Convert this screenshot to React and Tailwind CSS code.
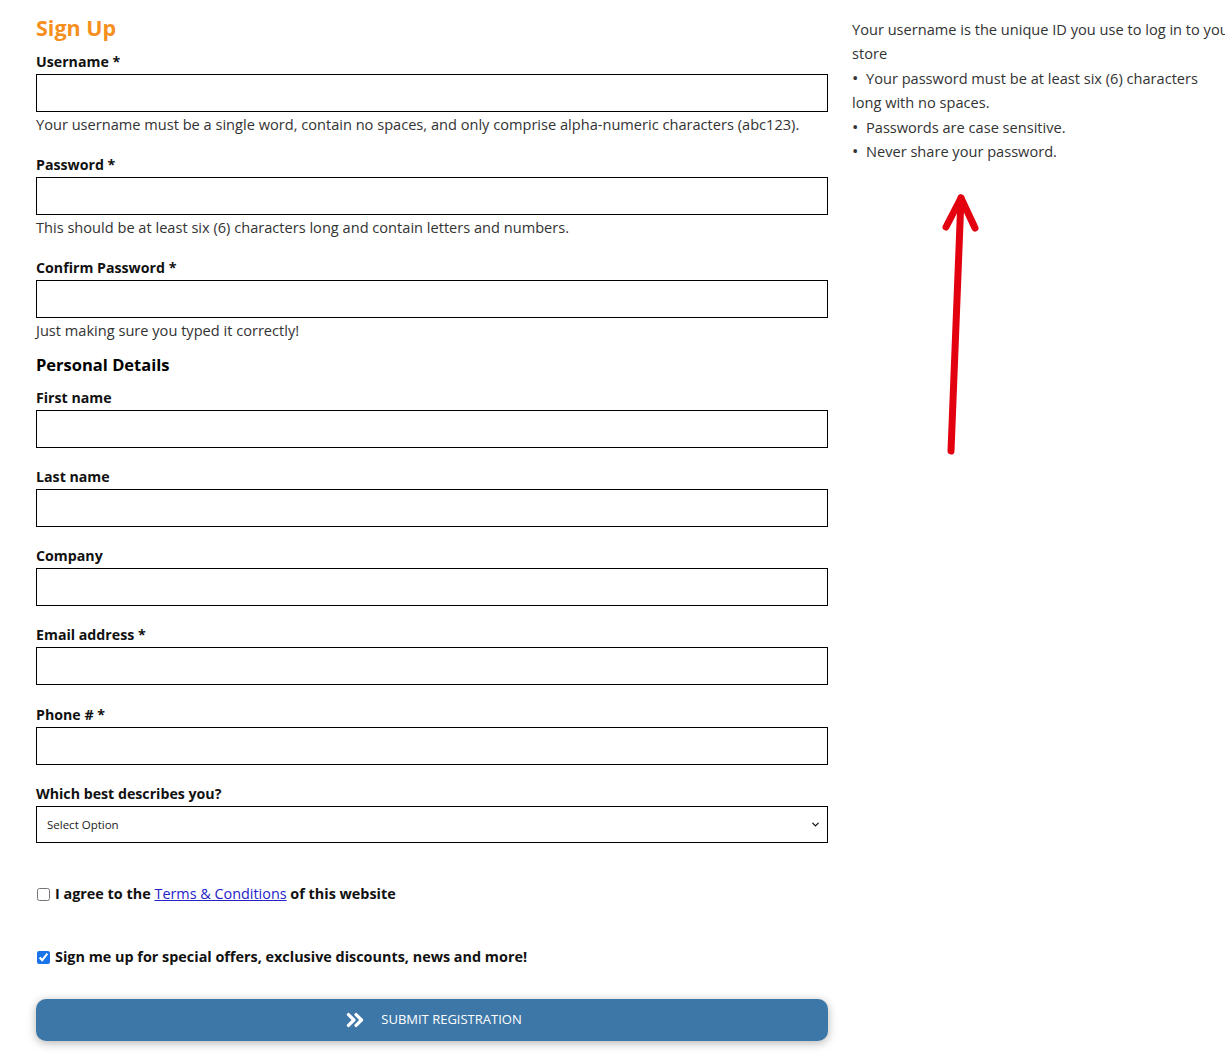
import React from 'react';
import { ChevronsRight, ChevronDown } from 'lucide-react';

const BODY = "font-['Open_Sans',sans-serif]";
const HEAD = "font-['Open_Sans',sans-serif]";

// Label + input + optional help line
const Field = ({ label, required, help, className = '' }) => (
  <div className={className || (help ? 'mb-[21px]' : 'mb-[19px]')}>
    <label className="block text-[14.2px] leading-5 font-bold text-[#111] mb-[2px]">
      {label}{required && ' *'}
    </label>
    <input type="text" className="block w-full h-[38px] border border-black bg-white" />
    {help && <p className="mt-[2px] text-[14.6px] leading-5 text-[#333]">{help}</p>}
  </div>
);

const Arrow = () => (
  <svg className="absolute left-[930px] top-[185px]" width="70" height="280" viewBox="0 0 70 280" fill="none">
    <path d="M21 266 L31 13" stroke="#e3000f" strokeWidth="7" strokeLinecap="round" />
    <path d="M16 42 L31 13 L45 43" stroke="#e3000f" strokeWidth="7" strokeLinecap="round" strokeLinejoin="round" />
  </svg>
);

export default function App() {
  return (
    <div className={`relative w-[1225px] h-[1062px] overflow-hidden bg-white ${BODY}`}>
      <div className="flex pl-9">
        {/* form column */}
        <div className="w-[792px] shrink-0 pt-3">
          <h1 className={`${HEAD} text-[21.5px] leading-8 font-bold text-[#f5901e] mb-2`}>Sign Up</h1>

          <Field label="Username" required help="Your username must be a single word, contain no spaces, and only comprise alpha-numeric characters (abc123)." />
          <Field label="Password" required help="This should be at least six (6) characters long and contain letters and numbers." />
          <Field label="Confirm Password" required className="mb-[13px]" help="Just making sure you typed it correctly!" />

          <h2 className={`${HEAD} text-[16.5px] leading-6 font-bold text-black mb-[11px]`}>Personal Details</h2>

          <Field label="First name" />
          <Field label="Last name" />
          <Field label="Company" />
          <Field label="Email address" required className="mb-[20px]" />
          <Field label="Phone #" required />

          <div>
            <label className="block text-[14.2px] leading-5 font-bold text-[#111] mb-[2px]">Which best describes you?</label>
            <div className="relative">
              <select className="block w-full h-[37px] border border-black bg-white pl-[10px] text-[11.5px] text-[#222] appearance-none">
                <option>Select Option</option>
              </select>
              <ChevronDown className="absolute right-[7px] top-[13px] text-black" size={11} strokeWidth={2.5} />
            </div>
          </div>

          <label className="flex items-center h-5 mt-[41px] text-[14.4px] font-bold text-[#111]">
            <input type="checkbox" className="w-[13px] h-[13px] m-0 mr-[5px] ml-px" />
            <span>I agree to the <a href="#" className="font-normal text-[#2323c8] underline">Terms &amp; Conditions</a> of this website</span>
          </label>

          <label className="flex items-center h-5 mt-[43px] text-[14.4px] font-bold text-[#111]">
            <input type="checkbox" defaultChecked className="w-[13px] h-[13px] m-0 mr-[5px] ml-px accent-[#1a73e8]" />
            <span>Sign me up for special offers, exclusive discounts, news and more!</span>
          </label>

          <button className="mt-[32px] w-full h-[42px] rounded-[10px] bg-[#3d77a8] shadow-[0_2px_10px_rgba(0,0,0,0.3)] flex items-center justify-center gap-[13px] text-white text-[13px] uppercase">
            <ChevronsRight size={26} strokeWidth={3} />
            <span>Submit Registration</span>
          </button>
        </div>

        {/* tips column */}
        <div className="ml-6 pt-[17px] text-[14.6px] leading-[24.4px] text-[#333] whitespace-nowrap">
          <p>Your username is the unique ID you use to log in to your</p>
          <p>store</p>
          <p><span className="text-[17px] leading-none">•</span>&nbsp; Your password must be at least six (6) characters</p>
          <p>long with no spaces.</p>
          <p><span className="text-[17px] leading-none">•</span>&nbsp; Passwords are case sensitive.</p>
          <p><span className="text-[17px] leading-none">•</span>&nbsp; Never share your password.</p>
        </div>
      </div>

      <Arrow />
    </div>
  );
}
